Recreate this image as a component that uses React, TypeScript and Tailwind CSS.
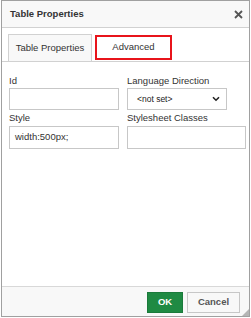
import React from "react";

export default function App() {
  return (
    <div className="w-[251px] h-[318px] bg-white" style={{ fontFamily: '"Liberation Sans", Arial, sans-serif' }}>
      <div className="ml-px w-[249px] h-[317px] border border-[#a0a0a0] flex flex-col bg-white relative">
        {/* title bar */}
        <div className="h-[27px] shrink-0 bg-[#f8f8f8] border-b border-[#d1d1d1] flex items-center justify-between pl-[8px] pr-[6px]">
          <span className="text-[9.5px] font-bold text-[#333]">Table Properties</span>
          <svg width="9" height="9" viewBox="0 0 9 9" className="mt-px">
            <path d="M1 1 L8 8 M8 1 L1 8" stroke="#555" strokeWidth="1.8" />
          </svg>
        </div>
        {/* body */}
        <div className="flex-1 flex flex-col">
          <div className="flex items-end gap-[2px] pl-[6px] pt-[7px] border-b border-[#d1d1d1] h-[34px]">
            <div className="w-[84px] h-[27px] bg-[#f8f8f8] border border-b-0 border-[#d1d1d1] flex items-center justify-center text-[9.5px] text-[#333]">
              Table Properties
            </div>
            <div className="w-[77px] h-[25px] mb-px ml-px border-2 border-[#e8141b] bg-white flex items-center justify-center text-[9.5px] text-[#333]">
              Advanced
            </div>
          </div>
          <div className="grid grid-cols-[110px_119px] gap-x-[8px] pl-[7px] pt-[13px]">
            <div className="flex flex-col">
              <span className="text-[9.5px] text-[#333] leading-[12px]">Id</span>
              <div className="mt-[1px] h-[22px] border border-[#c7c7c7] bg-white" />
            </div>
            <div className="flex flex-col">
              <span className="text-[9.5px] text-[#333] leading-[12px]">Language Direction</span>
              <div className="mt-[1px] h-[22px] w-[100px] border border-[#c7c7c7] bg-white flex items-center justify-between pl-[9px] pr-[6px]">
                <span className="text-[8.5px] text-[#222]">&lt;not set&gt;</span>
                <svg width="8" height="6" viewBox="0 0 8 6">
                  <path d="M1 1.2 L4 4.2 L7 1.2" stroke="#222" strokeWidth="1.6" fill="none" />
                </svg>
              </div>
            </div>
            <div className="flex flex-col mt-[2px]">
              <span className="text-[9.5px] text-[#333] leading-[12px]">Style</span>
              <div className="mt-[2px] h-[23px] border border-[#c7c7c7] bg-white flex items-center pl-[5px]">
                <span className="text-[9.5px] text-[#333]">width:500px;</span>
              </div>
            </div>
            <div className="flex flex-col mt-[2px]">
              <span className="text-[9.5px] text-[#333] leading-[12px]">Stylesheet Classes</span>
              <div className="mt-[2px] h-[23px] border border-[#c7c7c7] bg-white" />
            </div>
          </div>
        </div>
        {/* footer */}
        <div className="h-[30px] shrink-0 bg-[#f8f8f8] border-t border-[#d8d8d8] flex items-center justify-end gap-[4px] pr-[9px] pt-[1px]">
          <div className="w-[36px] h-[21px] bg-[#1f8a43] border border-[#1b7a3b] flex items-center justify-center text-[9.5px] font-bold text-white">
            OK
          </div>
          <div className="w-[53px] h-[21px] bg-[#f8f8f8] border border-[#c7c7c7] flex items-center justify-center text-[9.5px] font-bold text-[#555]">
            Cancel
          </div>
        </div>
        <svg width="7" height="7" viewBox="0 0 7 7" className="absolute right-0 bottom-0">
          <path d="M7 0 L7 7 L0 7 Z" fill="#b5b5b5" />
        </svg>
      </div>
    </div>
  );
}
